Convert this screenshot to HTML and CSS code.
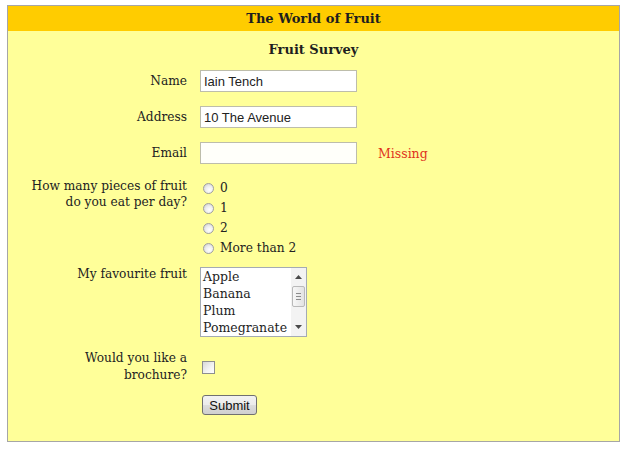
FILE: index.html
```html
<!DOCTYPE html>
<html lang="en">
<head>
<meta charset="utf-8">
<title>The World of Fruit</title>
<link rel="stylesheet" href="styles.css">
</head>
<body>
<div class="box">
  <div class="header">The World of Fruit</div>
  <div class="title">Fruit Survey</div>
  <form class="form">
    <div class="row">
      <label class="lbl lbl-mid">Name</label>
      <div class="ctl"><input class="txt" type="text" value="Iain Tench"></div>
    </div>
    <div class="row">
      <label class="lbl lbl-mid">Address</label>
      <div class="ctl"><input class="txt" type="text" value="10 The Avenue"></div>
    </div>
    <div class="row">
      <label class="lbl lbl-mid">Email</label>
      <div class="ctl"><input class="txt txt-empty" type="text" value=""><span class="missing">Missing</span></div>
    </div>
    <div class="row row-top">
      <label class="lbl">How many pieces of fruit<br>do you eat per day?</label>
      <div class="radios">
        <div class="opt"><span class="radio"></span><span>0</span></div>
        <div class="opt"><span class="radio"></span><span>1</span></div>
        <div class="opt"><span class="radio"></span><span>2</span></div>
        <div class="opt"><span class="radio"></span><span>More than 2</span></div>
      </div>
    </div>
    <div class="row row-top row-list">
      <label class="lbl">My favourite fruit</label>
      <div class="listbox">
        <div class="items">
          <div>Apple</div>
          <div>Banana</div>
          <div>Plum</div>
          <div>Pomegranate</div>
        </div>
        <div class="sbar">
          <svg class="arrow" width="7" height="4" viewBox="0 0 7 4"><path d="M0 4 L3.5 0 L7 4 Z" fill="#4a4a4a"/></svg>
          <div class="thumb"><span></span><span></span><span></span></div>
          <svg class="arrow arrow-down" width="7" height="4" viewBox="0 0 7 4"><path d="M0 0 L3.5 4 L7 0 Z" fill="#4a4a4a"/></svg>
        </div>
      </div>
    </div>
    <div class="row row-check">
      <label class="lbl lbl-two">Would you like a<br>brochure?</label>
      <div class="ctl"><span class="check"></span></div>
    </div>
    <div class="row row-submit">
      <div></div>
      <div class="ctl"><button class="btn" type="button">Submit</button></div>
    </div>
  </form>
</div>
</body>
</html>
```
FILE: styles.css
```css
html, body {
  margin: 0;
  padding: 0;
  background: #ffffff;
}
body {
  padding: 5px 0 0 7px;
  font-family: "DejaVu Serif", Georgia, serif;
  font-size: 12.2px;
  color: #222222;
}
.box {
  width: 611px;
  height: 435px;
  border: 1px solid #a6a6a6;
  background: #ffff99;
}
.header {
  height: 25px;
  background: #ffcc00;
  display: flex;
  align-items: center;
  justify-content: center;
  font-weight: bold;
  font-size: 13px;
  color: #1e1e1e;
}
.title {
  margin-top: 10px;
  height: 18px;
  line-height: 18px;
  text-align: center;
  font-weight: bold;
  font-size: 13px;
  color: #1e1e1e;
}
.form {
  display: flex;
  flex-direction: column;
  margin-top: 11px;
}
.row {
  display: grid;
  grid-template-columns: 179px 1fr;
  column-gap: 13px;
  align-items: center;
}
.row + .row { margin-top: 14px; }
.row.row-list { margin-top: 9px; }
.row.row-check { margin-top: 13px; }
.row.row-submit { margin-top: 11px; }
.row-top { align-items: start; }
.lbl {
  text-align: right;
  line-height: 16px;
}
.lbl-two { line-height: 17px; }
.row-list .lbl { margin-top: -1px; }
.ctl {
  display: flex;
  align-items: center;
}
.txt {
  box-sizing: border-box;
  width: 157px;
  height: 22px;
  margin: 0;
  padding: 0 3px;
  border: 1px solid #bdbdab;
  background: #ffffff;
  font-family: "Liberation Sans", Arial, sans-serif;
  font-size: 13px;
  color: #222;
  outline: none;
}
.txt-empty { background: #fffffa; }
.missing {
  margin-left: 21px;
  color: #e0321c;
  font-size: 12.5px;
}
.radios {
  display: flex;
  flex-direction: column;
}
.opt {
  height: 20px;
  display: flex;
  align-items: center;
}
.radio {
  box-sizing: border-box;
  width: 11px;
  height: 11px;
  margin: 0 6px 0 3px;
  border: 1px solid #a0a0a0;
  border-radius: 50%;
  background: radial-gradient(circle at 60% 65%, #ffffff 0%, #eeeeee 45%, #c8c8c8 100%);
}
.listbox {
  box-sizing: border-box;
  width: 107px;
  height: 70px;
  border: 1px solid #a4abb3;
  background: #ffffff;
  display: flex;
}
.items {
  flex: 1;
  padding-left: 2px;
  font-size: 12.5px;
  line-height: 17px;
  color: #1e1e1e;
  white-space: nowrap;
  overflow: hidden;
}
.sbar {
  width: 15px;
  background: #f3f3f3;
  display: flex;
  flex-direction: column;
  align-items: center;
}
.arrow { margin-top: 7px; }
.thumb {
  box-sizing: border-box;
  width: 13px;
  height: 21px;
  margin-top: 7px;
  border: 1px solid #b9b9b9;
  border-radius: 2px;
  background: linear-gradient(to right, #f7f7f7, #e3e3e3);
  display: flex;
  flex-direction: column;
  align-items: center;
  justify-content: center;
  gap: 2px;
}
.thumb span {
  display: block;
  width: 5px;
  height: 1px;
  background: #8c8c8c;
}
.arrow-down { margin-top: auto; margin-bottom: 7px; }
.check {
  box-sizing: border-box;
  display: block;
  width: 13px;
  height: 13px;
  margin-left: 2px;
  border: 1px solid #8e8f8f;
  background: linear-gradient(135deg, #d8d8d8 0%, #f4f4f4 60%, #ffffff 100%);
}
.btn {
  box-sizing: border-box;
  width: 55px;
  height: 20px;
  margin: 0 0 0 2px;
  padding: 0;
  border: 1px solid #707070;
  border-radius: 3px;
  background: linear-gradient(to bottom, #f2f2f2 0%, #ebebeb 50%, #dddddd 51%, #cfcfcf 100%);
  font-family: "Liberation Sans", Arial, sans-serif;
  font-size: 13px;
  color: #111;
}
```
